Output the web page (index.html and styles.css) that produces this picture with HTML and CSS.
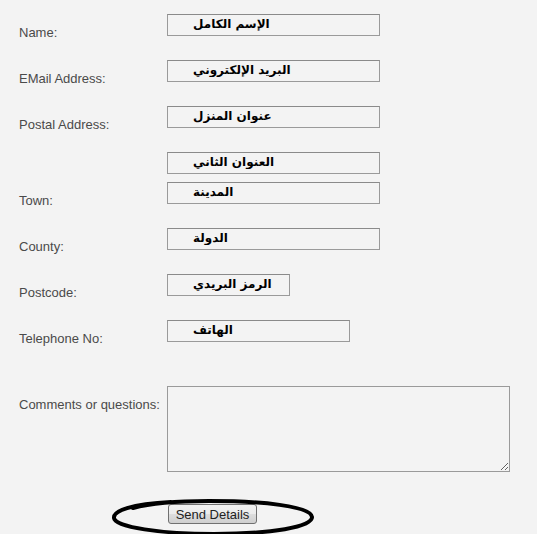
FILE: index.html
```html
<!DOCTYPE html>
<html lang="ar">
  <head>
    <meta charset="UTF-8" />
    <title>Contact form</title>
    <link rel="stylesheet" href="styles.css">
  </head>
  <body>
    <form class="contact-form" action="">
      <div class="row">
        <label class="label" for="name">Name:</label>
        <input class="field" type="text" id="name" value="الإسم الكامل" />
      </div>
      <div class="row">
        <label class="label" for="email">EMail Address:</label>
        <input class="field" type="text" id="email" value="البريد الإلكتروني" />
      </div>
      <div class="row">
        <label class="label" for="address1">Postal Address:</label>
        <input class="field" type="text" id="address1" value="عنوان المنزل" />
      </div>
      <div class="row row-tight">
        <span class="label"></span>
        <input class="field" type="text" id="address2" value="العنوان الثاني" />
      </div>
      <div class="row">
        <label class="label" for="town">Town:</label>
        <input class="field" type="text" id="town" value="المدينة" />
      </div>
      <div class="row">
        <label class="label" for="county">County:</label>
        <input class="field" type="text" id="county" value="الدولة" />
      </div>
      <div class="row">
        <label class="label" for="postcode">Postcode:</label>
        <input class="field field-short" type="text" id="postcode" value="الرمز البريدي" />
      </div>
      <div class="row row-wide">
        <label class="label" for="phone">Telephone No:</label>
        <input class="field field-mid" type="text" id="phone" value="الهاتف" />
      </div>
      <div class="row row-comments">
        <label class="label" for="comments">Comments or questions:</label>
        <textarea class="comments" id="comments"></textarea>
      </div>
      <div class="row">
        <span class="label"></span>
        <div class="send">
          <button class="send-button" type="submit">Send Details</button>
          <svg class="circle" width="206" height="42" viewBox="0 0 206 42">
            <path d="M 60 6 C 20 8, 2 15, 3 22 C 4 31, 50 38, 103 38 C 160 38, 202 31, 201 21 C 200 10, 150 5, 98 5 C 70 5, 40 7, 22 12"
                  fill="none" stroke="#000" stroke-width="4" stroke-linecap="round" />
          </svg>
        </div>
      </div>
    </form>
  </body>
</html>
```

FILE: styles.css
```css
body {
  margin: 0;
  padding: 14px 0 0 19px;
  background-color: #f3f3f3;
  color: #4a4a4a;
  font-family: "Liberation Sans", Arial, sans-serif;
  font-size: 13px;
}
.contact-form {
  display: flex;
  flex-direction: column;
}
.row {
  display: flex;
  align-items: flex-start;
  margin-bottom: 24px;
}
.row-tight {
  margin-bottom: 8px;
}
.row-wide {
  margin-bottom: 44px;
}
.row-comments {
  margin-bottom: 32px;
}
.label {
  width: 148px;
  flex-shrink: 0;
  padding-top: 12px;
  margin-bottom: -4px;
  line-height: 14px;
}
.field {
  box-sizing: border-box;
  width: 213px;
  height: 22px;
  margin: 0;
  padding: 0 0 3px 25px;
  border: 1px solid #9a9a9a;
  border-top-color: #8a8a8a;
  background: transparent;
  color: #000;
  font-family: "DejaVu Sans", Tahoma, sans-serif;
  font-weight: bold;
  font-size: 12px;
  outline: none;
}
.field-short {
  width: 123px;
}
.field-mid {
  width: 183px;
}
.comments {
  box-sizing: border-box;
  width: 343px;
  height: 86px;
  margin: 0;
  border: 1px solid #9a9a9a;
  background: #f3f3f3;
  resize: both;
}
.send {
  position: relative;
  margin-left: 1px;
}
.send-button {
  width: 89px;
  height: 20px;
  padding: 0;
  border: 1px solid #707070;
  border-radius: 3px;
  background: linear-gradient(#f2f2f2, #ebebeb 50%, #dddddd 51%, #cfcfcf);
  color: #222;
  font-family: "Liberation Sans", Arial, sans-serif;
  font-size: 13px;
}
.circle {
  position: absolute;
  left: -57px;
  top: -8px;
}
```
